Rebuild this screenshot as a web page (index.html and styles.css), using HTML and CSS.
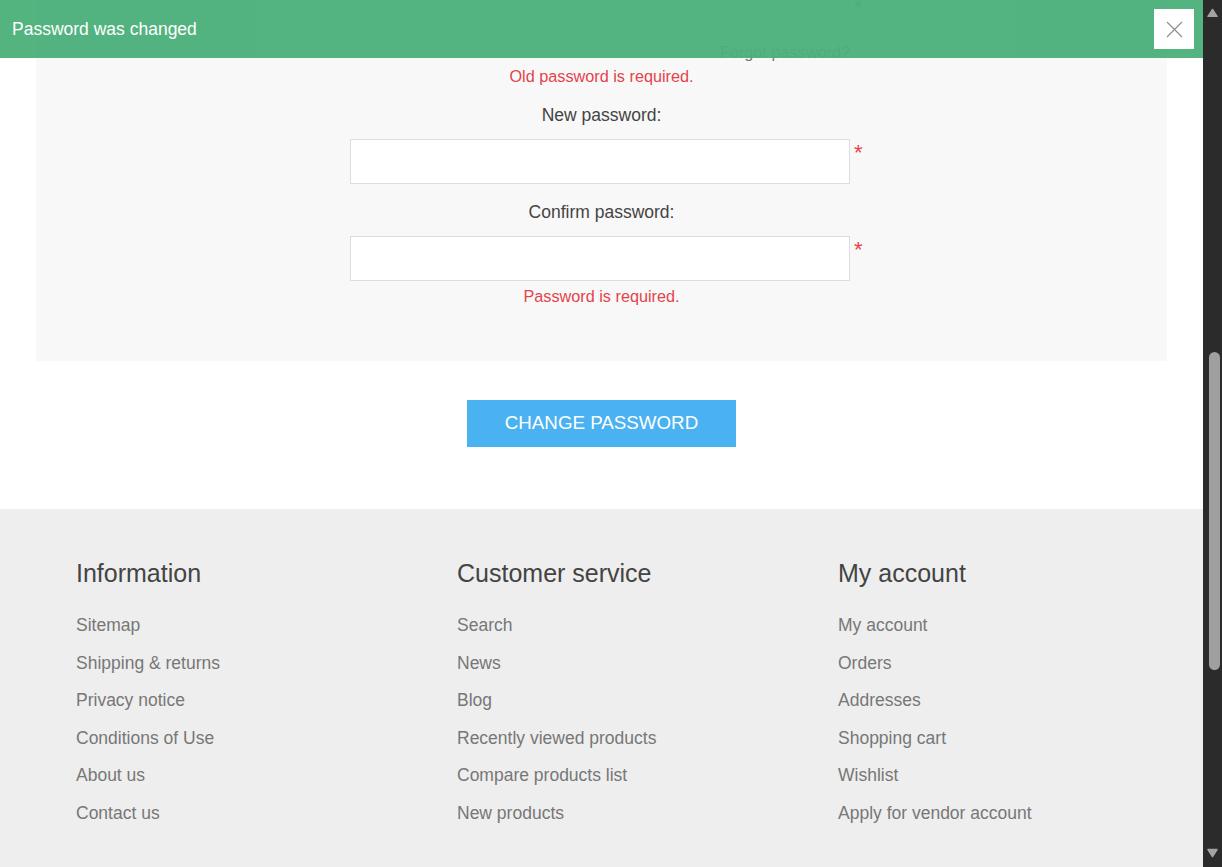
FILE: index.html
```html
<!DOCTYPE html>
<html lang="en">
<head>
<meta charset="utf-8">
<title>Change password</title>
<link rel="stylesheet" href="styles.css">
</head>
<body>
<div class="window">
  <div class="viewport">
    <div class="bar-notification">
      <p class="bar-text">Password was changed</p>
      <span class="close" title="Close">
        <svg width="17" height="17" viewBox="0 0 17 17"><path d="M1 1 L16 16 M16 1 L1 16" stroke="#8a8a8a" stroke-width="1.2" fill="none"/></svg>
      </span>
    </div>

    <div class="page">
      <form class="form">
        <div class="fieldset">
          <div class="inputs first">
            <label class="label">Old password:</label>
            <div class="field"><input class="text-box" type="password"><span class="required">*</span></div>
            <div class="forgot"><a href="#">Forgot password?</a></div>
            <span class="error">Old password is required.</span>
          </div>
          <div class="inputs">
            <label class="label">New password:</label>
            <div class="field"><input class="text-box" type="password"><span class="required">*</span></div>
          </div>
          <div class="inputs last">
            <label class="label">Confirm password:</label>
            <div class="field"><input class="text-box" type="password"><span class="required">*</span></div>
            <span class="error">Password is required.</span>
          </div>
        </div>
        <div class="buttons">
          <button type="button" class="button">Change password</button>
        </div>
      </form>
    </div>

    <footer class="footer">
      <div class="footer-cols">
        <div class="col">
          <h3 class="title">Information</h3>
          <ul class="list">
            <li><a href="#">Sitemap</a></li>
            <li><a href="#">Shipping &amp; returns</a></li>
            <li><a href="#">Privacy notice</a></li>
            <li><a href="#">Conditions of Use</a></li>
            <li><a href="#">About us</a></li>
            <li><a href="#">Contact us</a></li>
          </ul>
        </div>
        <div class="col">
          <h3 class="title">Customer service</h3>
          <ul class="list">
            <li><a href="#">Search</a></li>
            <li><a href="#">News</a></li>
            <li><a href="#">Blog</a></li>
            <li><a href="#">Recently viewed products</a></li>
            <li><a href="#">Compare products list</a></li>
            <li><a href="#">New products</a></li>
          </ul>
        </div>
        <div class="col">
          <h3 class="title">My account</h3>
          <ul class="list">
            <li><a href="#">My account</a></li>
            <li><a href="#">Orders</a></li>
            <li><a href="#">Addresses</a></li>
            <li><a href="#">Shopping cart</a></li>
            <li><a href="#">Wishlist</a></li>
            <li><a href="#">Apply for vendor account</a></li>
          </ul>
        </div>
      </div>
    </footer>
  </div>

  <div class="scrollbar">
    <svg class="arrow up" width="19" height="17" viewBox="0 0 19 17"><path d="M9.5 9.5 L14 16.5 L5 16.5 Z" fill="#a3a3a3" stroke="#a3a3a3" stroke-width="1.5" stroke-linejoin="round"/></svg>
    <div class="track">
      <div class="thumb"></div>
    </div>
    <svg class="arrow down" width="19" height="19" viewBox="0 0 19 19"><path d="M5 1.5 L14 1.5 L9.5 8.5 Z" fill="#a3a3a3" stroke="#a3a3a3" stroke-width="1.5" stroke-linejoin="round"/></svg>
  </div>
</div>
</body>
</html>
```

FILE: styles.css
```css
* { box-sizing: border-box; }

html, body {
  margin: 0;
  padding: 0;
  height: 100%;
}

body {
  font-family: "Liberation Sans", Arial, sans-serif;
  color: #444;
  background: #fff;
  overflow: hidden;
}

a { text-decoration: none; color: inherit; }

.window {
  display: flex;
  height: 867px;
  width: 100%;
}

.viewport {
  position: relative;
  flex: 1;
  height: 867px;
  overflow: hidden;
  display: flow-root;
}

/* notification bar */
.bar-notification {
  position: absolute;
  top: 0;
  left: 0;
  right: 0;
  height: 58px;
  background: #4bb07a;
  opacity: 0.95;
  z-index: 10;
  display: flex;
  align-items: center;
  padding: 0 12px;
}

.bar-text {
  margin: 0;
  color: #fff;
  font-size: 17.5px;
  line-height: 22px;
}

.close {
  position: absolute;
  top: 9px;
  right: 9px;
  width: 40px;
  height: 40px;
  background: #fff;
  display: flex;
  align-items: center;
  justify-content: center;
}

/* form */
.page {
  display: flow-root;
}

.fieldset {
  margin: 0 36px;
  background: #f8f8f8;
  padding-bottom: 55px;
  display: flow-root;
}

.inputs {
  display: flex;
  flex-direction: column;
  align-items: center;
  margin-bottom: 17px;
}

.inputs.first {
  margin-top: -41px;
  margin-bottom: 18px;
}

.inputs.last { margin-bottom: 0; }

.label {
  display: block;
  font-size: 17.5px;
  line-height: 22px;
  color: #444;
  margin-bottom: 13px;
}

.field {
  position: relative;
  width: 500px;
  height: 45px;
  margin-left: -3px;
}

.text-box {
  display: block;
  width: 500px;
  height: 45px;
  border: 1px solid #ddd;
  background: #fff;
  margin: 0;
  padding: 0 10px;
  font-size: 17.5px;
  outline: none;
}

.required {
  position: absolute;
  left: 504px;
  top: 3px;
  font-size: 22px;
  line-height: 22px;
  color: #e4434b;
}

.forgot {
  width: 500px;
  margin-left: -3px;
  margin-top: 3px;
  text-align: right;
  font-size: 16.25px;
  line-height: 20px;
  color: #777;
}

.error {
  display: block;
  margin-top: 5px;
  font-size: 16.25px;
  line-height: 20px;
  color: #e4434b;
}

.inputs.first .error { margin-top: 4px; }

.buttons {
  display: flex;
  justify-content: center;
  margin-top: 39px;
  margin-bottom: 62px;
}

.button {
  width: 269px;
  height: 47px;
  border: none;
  background: #4ab2f1;
  color: #fff;
  font-family: "Liberation Sans", Arial, sans-serif;
  font-size: 18.75px;
  line-height: 45px;
  text-transform: uppercase;
  padding: 0 0 2px;
  cursor: pointer;
}

/* footer */
.footer {
  background: #eee;
  padding-top: 49px;
  padding-bottom: 60px;
}

.footer-cols {
  display: grid;
  grid-template-columns: 381px 381px 1fr;
  padding-left: 76px;
}

.title {
  margin: 0 0 19px;
  font-weight: normal;
  font-size: 25px;
  line-height: 30px;
  color: #444;
}

.list {
  list-style: none;
  margin: 0;
  padding: 0;
}

.list li {
  font-size: 17.5px;
  line-height: 37.6px;
  color: #777;
}

/* fake scrollbar */
.scrollbar {
  width: 19px;
  height: 867px;
  background: #2b2b2b;
  display: flex;
  flex-direction: column;
}

.arrow { display: block; flex: none; }

.track {
  flex: 1;
  display: flex;
  flex-direction: column;
  align-items: center;
}

.thumb {
  margin-top: 335px;
  width: 11px;
  height: 318px;
  border-radius: 6px;
  background: #9f9f9f;
  margin-left: 3px;
}

.arrow.down { margin-bottom: 0; }
```
